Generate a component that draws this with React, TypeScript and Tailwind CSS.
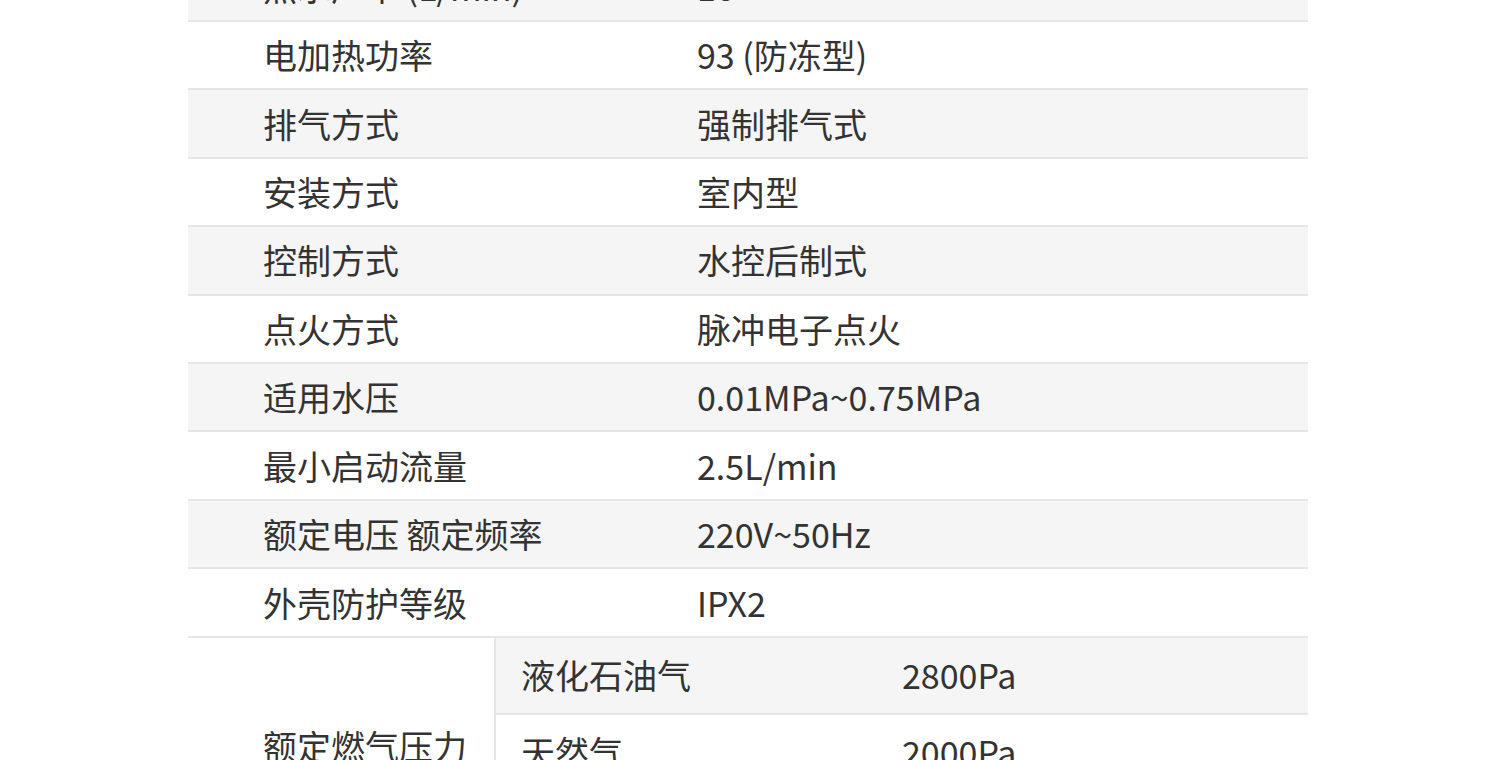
import React from 'react';

const rows: [string, string][] = [
  ['热水产率 (L/min)', '16'],
  ['电加热功率', '93 (防冻型)'],
  ['排气方式', '强制排气式'],
  ['安装方式', '室内型'],
  ['控制方式', '水控后制式'],
  ['点火方式', '脉冲电子点火'],
  ['适用水压', '0.01MPa~0.75MPa'],
  ['最小启动流量', '2.5L/min'],
  ['额定电压 额定频率', '220V~50Hz'],
  ['外壳防护等级', 'IPX2'],
];

const gasRows: [string, string][] = [
  ['液化石油气', '2800Pa'],
  ['天然气', '2000Pa'],
  ['人工煤气', '1000Pa'],
];

export default function App() {
  return (
    <div
      className="w-[1500px] h-[760px] overflow-hidden bg-white text-[#333] text-[34px]"
      style={{ fontFamily: '"Noto Sans CJK SC", "Noto Sans", sans-serif' }}
    >
      <div className="ml-[188px] w-[1120px] -mt-[46.6px]">
        {/* 普通参数行 */}
        {rows.map(([label, value], i) => (
          <div
            key={label}
            className={`grid grid-cols-[509px_1fr] items-center h-[68.44px] border-b-2 border-[#e6e6e6] ${
              i % 2 === 0 ? 'bg-[#f5f5f5]' : 'bg-white'
            }`}
          >
            <div className="pl-[75px] leading-none">{label}</div>
            <div className="leading-none">{value}</div>
          </div>
        ))}

        {/* 额定燃气压力 */}
        <div className="flex bg-white">
          <div className="w-[308px] pl-[75px] flex items-center pb-[14px] leading-none border-r-2 border-[#e6e6e6]">
            额定燃气压力
          </div>
          <div className="flex-1">
            {gasRows.map(([gas, pa], i) => (
              <div
                key={gas}
                className={`grid grid-cols-[406px_1fr] items-center h-[77px] border-b-2 border-[#e6e6e6] ${
                  i % 2 === 0 ? 'bg-[#f5f5f5]' : 'bg-white'
                }`}
              >
                <div className="pl-[25px] leading-none">{gas}</div>
                <div className="leading-none">{pa}</div>
              </div>
            ))}
          </div>
        </div>
      </div>
    </div>
  );
}
